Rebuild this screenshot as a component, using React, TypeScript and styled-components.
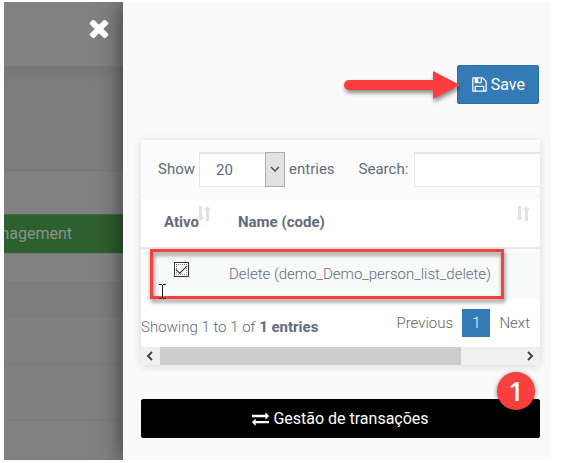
import React from "react";
import styled, { createGlobalStyle } from "styled-components";

const GlobalStyle = createGlobalStyle`
  * { box-sizing: border-box; }
  body { margin: 0; background: #fff; font: 16px/24px Roboto, sans-serif; color: #5f6b7a; }
  button, input, select { font: inherit; color: inherit; margin: 0; }
`;

const Frame = styled.div`
  display: flex;
  margin: 2px 20px 3px 4px;
  overflow: hidden;
`;

const Backdrop = styled.aside`
  flex: 0 0 119px;
  min-width: 0;
  display: flex;
  flex-direction: column;
  background: #808080;
`;

const TopBar = styled.div`
  display: flex;
  justify-content: flex-end;
  height: 64px;
  padding: 12px 10px 0 0;
  background: #818181;
`;

const CloseButton = styled.button`
  width: 28px;
  height: 28px;
  padding: 0;
  border: 0;
  background: none;
  color: #fff;
  position: relative;
  z-index: 1;
  svg { display: block; }
`;

const Band = styled.div<{ $height: number; $shade: string }>`
  height: ${(p) => p.$height}px;
  background: ${(p) => p.$shade};
  border-top: 1px solid #797979;
`;

const Subheader = styled(Band)`
  background: linear-gradient(#777, #7d7d7d 18px);
`;

const GreenTab = styled.div`
  display: flex;
  align-items: center;
  justify-content: flex-end;
  height: 39px;
  padding-right: 51px;
  border-top: 1px solid #3d6f3e;
  background: #2e5f2f;
  color: #8b938b;
  white-space: nowrap;
`;

const Drawer = styled.main`
  position: relative;
  flex: 1;
  min-width: 0;
  padding: 63px 11px 22px 18px;
  background: #fafafa;
  box-shadow: 0 0 22px rgba(0, 0, 0, 0.6);
`;

const Actions = styled.div`
  display: flex;
  justify-content: flex-end;
  align-items: center;
  padding-right: 1px;
  margin-bottom: 36px;
`;

const Arrow = styled.svg`
  position: relative;
  margin-right: -3px;
  z-index: 1;
  overflow: visible;
  filter: drop-shadow(1px 3px 2px rgba(0, 0, 0, 0.45));
`;

const Button = styled.button`
  display: flex;
  align-items: center;
  justify-content: center;
  gap: 3px;
  height: 39px;
  padding: 0 13px;
  border: 1px solid #2e6da4;
  border-radius: 2px;
  background: #337ab7;
  color: #fff;
`;

const BlackButton = styled(Button)`
  gap: 4px;
  width: 100%;
  border-color: #000;
  background: #000;
`;

const Card = styled.section`
  overflow: hidden;
  background: #fff;
  font-size: 15px;
`;

const CardShadow = styled.div`
  margin-bottom: 34px;
  box-shadow: 0 1px 8px rgba(0, 0, 0, 0.14);
`;

const Toolbar = styled.div`
  display: flex;
  align-items: center;
  height: 57px;
  padding: 2px 0 0 17px;
  border-bottom: 1px solid #f4f4f4;
  background: #fcfcfc;
  white-space: nowrap;
`;

const Field = styled.label`
  display: flex;
  align-items: center;
  gap: 4px;
  margin-right: 24px;
`;

const SearchField = styled(Field)`
  gap: 6px;
  margin-right: 0;
`;

const SelectBox = styled.span`
  display: grid;
  grid-template-columns: 66px 20px;
  height: 35px;
`;

const Select = styled.select`
  grid-area: 1 / 1 / 2 / 3;
  appearance: none;
  padding: 0 0 0 16px;
  border: 1px solid #e6e6e6;
  border-top-width: 2px;
  border-radius: 0;
  background: #fff;
`;

const SelectArrow = styled.span`
  grid-area: 1 / 2;
  display: grid;
  place-items: center;
  border: 1px solid #adadad;
  background: #e1e1e1;
  pointer-events: none;
`;

const SearchInput = styled.input`
  width: 180px;
  height: 35px;
  border: 1px solid #e6e6e6;
  border-top-width: 2px;
  border-radius: 0;
  background: #fff;
`;

const TableArea = styled.div`
  position: relative;
`;

const Table = styled.table`
  width: 100%;
  border-collapse: collapse;
  table-layout: fixed;
`;

const HeadCell = styled.th<{ $inset: number }>`
  height: 51px;
  padding: 0 10px 0 ${(p) => p.$inset}px;
  border-bottom: 2px solid #e7eaec;
  font-weight: 700;
  text-align: left;
  white-space: nowrap;
  &:first-child { width: 73px; padding-right: 0; }
`;

const HeadContent = styled.div`
  display: flex;
  align-items: center;
  svg { margin: 0 0 16px -2px; flex: none; }
`;

const WideHead = styled(HeadContent)`
  justify-content: space-between;
`;

const Cell = styled.td<{ $inset: number }>`
  height: 51px;
  padding: 0 0 0 ${(p) => p.$inset}px;
  background: #f9fbfb;
  font-weight: 300;
  white-space: nowrap;
`;

const Checkbox = styled.input`
  appearance: none;
  display: grid;
  place-items: center;
  width: 15px;
  height: 15px;
  margin-bottom: 9px;
  border: 1px solid #333;
  outline: 1px dotted #888;
  outline-offset: -3px;
  background: #fff;
  &:checked::after {
    content: "";
    width: 10px;
    height: 5px;
    margin-bottom: 3px;
    border: solid #222;
    border-width: 0 0 1px 1px;
    transform: rotate(-45deg);
  }
`;

const Highlight = styled.div`
  position: absolute;
  top: 52px;
  left: 9px;
  right: 36px;
  height: 50px;
  border: 3px solid #fb3e3e;
  filter: drop-shadow(1px 3px 2px rgba(0, 0, 0, 0.5));
  pointer-events: none;
`;

const Cursor = styled.svg`
  position: absolute;
  top: 87px;
  left: 18px;
`;

const Footer = styled.div`
  display: flex;
  justify-content: space-between;
  height: 48px;
  padding: 10px 10px 0 0;
  font-weight: 300;
  white-space: nowrap;
`;

const Summary = styled.div`
  padding-top: 6px;
  b { font-weight: 700; }
`;

const Pager = styled.nav`
  display: flex;
  height: 28px;
`;

const PageLink = styled.a<{ $current?: boolean }>`
  display: flex;
  align-items: center;
  padding: 0 ${(p) => (p.$current ? 10 : 0)}px;
  margin: 0 ${(p) => (p.$current ? 9 : 0)}px;
  background: ${(p) => (p.$current ? "#337ab7" : "transparent")};
  color: ${(p) => (p.$current ? "#fff" : "#666")};
  text-decoration: none;
`;

const ScrollTrack = styled.div`
  display: flex;
  align-items: center;
  height: 18px;
  padding: 0 5px 0 4px;
  background: #f0f0f0;
`;

const ScrollThumb = styled.div`
  flex: 0 0 301px;
  align-self: stretch;
  margin: 0 auto 0 6px;
  background: #cdcdcd;
`;

const BottomAction = styled.div`
  position: relative;
`;

const Badge = styled.span`
  position: absolute;
  top: -27px;
  right: 5px;
  display: grid;
  place-items: center;
  width: 38px;
  height: 38px;
  border-radius: 50%;
  background: #fb3e3e;
  box-shadow: 0 1px 4px rgba(0, 0, 0, 0.5);
  color: #fff;
  font: 600 27px/36px "Open Sans", sans-serif;
`;

const Icon = ({ size, d }: { size: number; d: string }) => (
  <svg width={size} height={size} viewBox="0 0 1792 1792" fill="currentColor" aria-hidden="true">
    <path d={d} />
  </svg>
);

const TIMES =
  "M1490 1322q0 40-28 68l-136 136q-28 28-68 28t-68-28l-294-294-294 294q-28 28-68 28t-68-28l-136-136q-28-28-28-68t28-68l294-294-294-294q-28-28-28-68t28-68l136-136q28-28 68-28t68 28l294 294 294-294q28-28 68-28t68 28l136 136q28 28 28 68t-28 68l-294 294 294 294q28 28 28 68z";
const FLOPPY =
  "M512 1536h768v-384h-768v384zm896 0h128v-896q0-14-10-38.5t-20-34.5l-281-281q-10-10-34-20t-39-10v416q0 40-28 68t-68 28h-576q-40 0-68-28t-28-68v-416h-128v1280h128v-416q0-40 28-68t68-28h832q40 0 68 28t28 68v416zm-384-928v-320q0-13-9.500-22.500t-22.500-9.500h-192q-13 0-22.500 9.500t-9.500 22.500v320q0 13 9.500 22.500t22.500 9.500h192q13 0 22.500-9.500t9.500-22.500zm640 32v928q0 40-28 68t-68 28h-1344q-40 0-68-28t-28-68v-1344q0-40 28-68t68-28h928q40 0 88 20t76 48l280 280q28 28 48 76t20 88z";
const EXCHANGE =
  "M1792 1184v192q0 13-9.500 22.500t-22.500 9.500h-1376v192q0 13-9.500 22.500t-22.500 9.500q-12 0-24-10l-319-320q-9-9-9-22 0-14 9-23l320-320q9-9 23-9 13 0 22.500 9.500t9.500 22.500v192h1376q13 0 22.500 9.500t9.500 22.500zm0-544q0 14-9 23l-320 320q-9 9-23 9-13 0-22.500-9.500t-9.500-22.500v-192h-1376q-13 0-22.500-9.500t-9.500-22.500v-192q0-13 9.500-22.500t22.500-9.500h1376v-192q0-14 9-23t23-9q12 0 24 10l319 319q9 9 9 23z";

const SortIcon = () => (
  <svg width="14" height="16" viewBox="0 0 14 16" fill="#dfe3e8" aria-hidden="true">
    <path d="M2 0h3v11h2l-3.500 4L0 11h2zM9 15h3V4h2l-3.500-4L7 4h2z" />
  </svg>
);

const Chevron = ({ d, width, height, bold }: { d: string; width: number; height: number; bold?: boolean }) => (
  <svg width={width} height={height} viewBox={`0 0 ${width} ${height}`} fill="none" stroke="#444" strokeWidth={bold ? 2 : 1.3} aria-hidden="true">
    <path d={d} />
  </svg>
);

export default function App() {
  return (
    <>
      <GlobalStyle />
      <Frame>
        <Backdrop>
          <TopBar>
            <CloseButton aria-label="Close">
              <Icon size={28} d={TIMES} />
            </CloseButton>
          </TopBar>
          <Subheader $height={104} $shade="#7d7d7d" />
          <Band $height={44} $shade="#818181" />
          <GreenTab>Management</GreenTab>
          <Band $height={29} $shade="#818181" />
          <Band $height={34} $shade="#7d7d7d" />
          <Band $height={48} $shade="#808080" />
          <Band $height={56} $shade="#808080" />
          <Band $height={39} $shade="#818181" />
        </Backdrop>
        <Drawer>
          <Actions>
            <Arrow width="116" height="30" viewBox="0 0 116 30" fill="#fb3e3e" aria-hidden="true">
              <path d="M5 10h84V1l27 14-27 14v-9H5a5 5 0 0 1 0-10z" />
            </Arrow>
            <Button>
              <Icon size={17} d={FLOPPY} />
              Save
            </Button>
          </Actions>
          <CardShadow>
            <Card>
              <Toolbar>
                <Field>
                  Show
                  <SelectBox>
                    <Select defaultValue="20">
                      <option>20</option>
                      <option>50</option>
                    </Select>
                    <SelectArrow>
                      <Chevron width={10} height={6} d="M1 1l4 4 4-4" />
                    </SelectArrow>
                  </SelectBox>
                  entries
                </Field>
                <SearchField>
                  Search:
                  <SearchInput type="text" />
                </SearchField>
              </Toolbar>
              <TableArea>
                <Table>
                  <thead>
                    <tr>
                      <HeadCell $inset={23}>
                        <HeadContent>
                          Ativo
                          <SortIcon />
                        </HeadContent>
                      </HeadCell>
                      <HeadCell $inset={24}>
                        <WideHead>
                          Name (code)
                          <SortIcon />
                        </WideHead>
                      </HeadCell>
                    </tr>
                  </thead>
                  <tbody>
                    <tr>
                      <Cell $inset={33}>
                        <Checkbox type="checkbox" defaultChecked aria-label="Ativo" />
                      </Cell>
                      <Cell $inset={15}>Delete (demo_Demo_person_list_delete)</Cell>
                    </tr>
                  </tbody>
                </Table>
                <Highlight />
                <Cursor width="7" height="15" viewBox="0 0 7 15" fill="none" stroke="#222" aria-hidden="true">
                  <path d="M0 .5h3M4 .5h3M3.500 1v13M0 14.500h3M4 14.500h3" />
                </Cursor>
              </TableArea>
              <Footer>
                <Summary>
                  Showing 1 to 1 of <b>1 entries</b>
                </Summary>
                <Pager>
                  <PageLink href="#previous">Previous</PageLink>
                  <PageLink href="#1" $current>1</PageLink>
                  <PageLink href="#next">Next</PageLink>
                </Pager>
              </Footer>
              <ScrollTrack>
                <Chevron width={9} height={10} d="M7 1L3 5l4 4" bold />
                <ScrollThumb />
                <Chevron width={9} height={10} d="M2 1l4 4-4 4" bold />
              </ScrollTrack>
            </Card>
          </CardShadow>
          <BottomAction>
            <BlackButton>
              <Icon size={17} d={EXCHANGE} />
              Gestão de transações
            </BlackButton>
            <Badge>1</Badge>
          </BottomAction>
        </Drawer>
      </Frame>
    </>
  );
}
